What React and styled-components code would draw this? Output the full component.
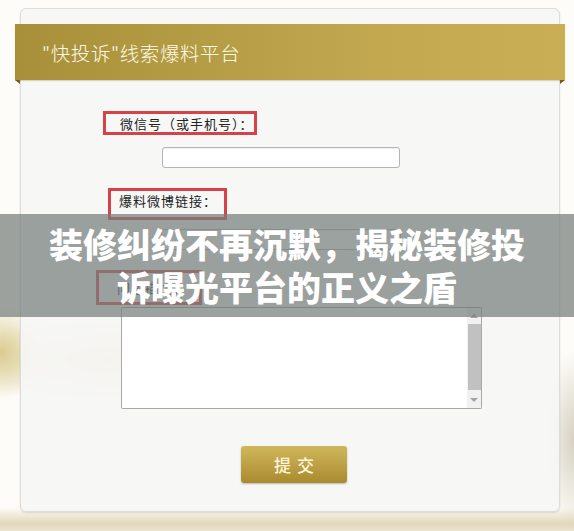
// Libs
import React from 'react';
import styled, { createGlobalStyle } from 'styled-components';

// Styles
const GlobalStyle = createGlobalStyle`
  html, body {
    margin: 0;
    padding: 0;
  }

  body {
    font-family: 'Noto Sans CJK SC', 'Noto Sans', sans-serif;
    background:
      radial-gradient(ellipse 40px 48px at 2px 352px, rgba(214, 198, 128, .85), rgba(214, 198, 128, 0) 100%),
      radial-gradient(ellipse 150px 45px at 110px 360px, rgba(222, 212, 178, .9), rgba(222, 212, 178, 0) 100%),
      radial-gradient(ellipse 30px 90px at 574px 440px, rgba(205, 198, 180, .8), rgba(205, 198, 180, 0) 100%),
      linear-gradient(180deg, rgba(255, 255, 255, 0) 508px, #efe8d6 516px, #e2d7bc 524px, #ece4cf 531px),
      #fdfcf8;
  }
`;

const Page = styled.div`
  position: relative;
  width: 574px;
  height: 531px;
  padding-top: 8px;
  box-sizing: border-box;
  overflow: hidden;
`;

const Card = styled.section`
  position: relative;
  width: 540px;
  height: 504px;
  margin-left: 20px;
  padding-top: 15px;
  box-sizing: border-box;
  border: 1px solid #dcdcda;
  border-radius: 6px;
  background: rgba(246, 246, 245, .9);
  box-shadow: 0 1px 2px rgba(0, 0, 0, .12);
`;

const Band = styled.header`
  position: relative;
  display: flex;
  align-items: center;
  height: 56px;
  margin: 0 -6px;
  padding-left: 27px;
  background: linear-gradient(90deg, #a8903a 0%, #b59d45 35%, #c4a951 70%, #c9ae56 100%);
  box-shadow: 0 1px 1px rgba(120, 100, 40, .25);

  &::before,
  &::after {
    content: '';
    position: absolute;
    bottom: -4px;
    width: 0;
    height: 0;
    border-top: 4px solid #6e5d22;
  }

  &::before {
    left: 0;
    border-left: 5px solid transparent;
  }

  &::after {
    right: 0;
    border-right: 5px solid transparent;
  }
`;

const BandTitle = styled.h1`
  margin: 0;
  font: 300 19.5px 'Noto Sans CJK SC', sans-serif;
  color: #fffbea;
  letter-spacing: .6px;
`;

const Form = styled.form`
  display: flex;
  flex-direction: column;
  align-items: flex-start;
`;

const Label = styled.div`
  display: flex;
  align-items: ${({ $low }) => ($low ? 'flex-end' : 'center')};
  width: ${({ $w }) => $w}px;
  height: ${({ $h }) => $h}px;
  margin: ${({ $top }) => $top}px 0 0 ${({ $left }) => $left}px;
  padding: 0 0 ${({ $low }) => ($low ? 7 : 0)}px ${({ $pad }) => $pad}px;
  box-sizing: border-box;
  border: 3px solid #d6414a;
  font: 400 13px 'Noto Sans CJK SC', sans-serif;
  letter-spacing: 1px;
  white-space: nowrap;
  color: #222;
`;

const TextInput = styled.input`
  width: ${({ $w }) => $w}px;
  height: 21px;
  margin: ${({ $top }) => $top}px 0 0 ${({ $left }) => $left}px;
  padding: 0 4px;
  box-sizing: border-box;
  border: 1px solid #b4b4b4;
  border-radius: 3px;
  background: #fff;
  box-shadow: inset 0 1px 1px rgba(0, 0, 0, .06);
  outline: none;
`;

const AreaBox = styled.div`
  display: flex;
  width: 361px;
  height: 102px;
  margin: 2px 0 0 100px;
  box-sizing: border-box;
  border: 1px solid #a8a8a8;
  border-top-color: #9a9a9a;
  border-radius: 2px;
  background: #fff;
  overflow: hidden;
`;

const Area = styled.textarea`
  flex: 1;
  border: none;
  resize: none;
  outline: none;
  background: transparent;
`;

const Track = styled.div`
  display: flex;
  flex-direction: column;
  align-items: center;
  width: 14px;
  background: #f1f1f1;
`;

const Arrow = styled.div`
  display: flex;
  align-items: center;
  justify-content: center;
  height: 16px;

  &::before {
    content: '';
    width: 0;
    height: 0;
    border-left: 4px solid transparent;
    border-right: 4px solid transparent;
    ${({ $down }) => ($down ? 'border-top: 4px solid #a3a3a3;' : 'border-bottom: 4px solid #a3a3a3;')}
  }
`;

const Thumb = styled.div`
  width: 13px;
  height: 66px;
  margin-bottom: 2px;
  background: #c1c1c1;
`;

const Submit = styled.button`
  width: 106px;
  height: 37px;
  margin: 37px 0 0 220px;
  border: none;
  border-radius: 3px;
  background: linear-gradient(180deg, #d0b65b 0%, #bea146 50%, #a88b2f 100%);
  box-shadow: 0 1px 2px rgba(90, 70, 20, .35);
  font: 500 17px 'Noto Sans CJK SC', sans-serif;
  color: #fff6dc;
  letter-spacing: 6px;
  text-indent: 6px;
`;

const Overlay = styled.div`
  position: absolute;
  top: 214px;
  left: 0;
  width: 100%;
  height: 103px;
  padding: 8px 40px 0;
  box-sizing: border-box;
  background: rgba(118, 126, 124, .72);
  text-align: center;
  font: 900 34px 'Noto Sans CJK SC', sans-serif;
  line-height: 43px;
  color: #fff;
`;

const App = () => {
  return (
    <>
      <GlobalStyle />
      <Page>
        <Card>
          <Band>
            <BandTitle>"快投诉"线索爆料平台</BandTitle>
          </Band>
          <Form onSubmit={e => e.preventDefault()}>
            <Label $top={31} $left={82} $w={154} $h={24} $pad={14}>
              微信号（或手机号）：
            </Label>
            <TextInput $top={12} $left={141} $w={238} />
            <Label $top={20} $left={87} $w={119} $h={32} $pad={8} $low>
              爆料微博链接：
            </Label>
            <TextInput $top={9} $left={140} $w={240} />
            <Label $top={20} $left={75} $w={106} $h={35} $pad={18}>
              问题描述：
            </Label>
            <AreaBox>
              <Area />
              <Track>
                <Arrow />
                <Thumb />
                <Arrow $down />
              </Track>
            </AreaBox>
            <Submit type='submit'>提交</Submit>
          </Form>
        </Card>
        <Overlay>装修纠纷不再沉默，揭秘装修投诉曝光平台的正义之盾</Overlay>
      </Page>
    </>
  );
};

export default App;
